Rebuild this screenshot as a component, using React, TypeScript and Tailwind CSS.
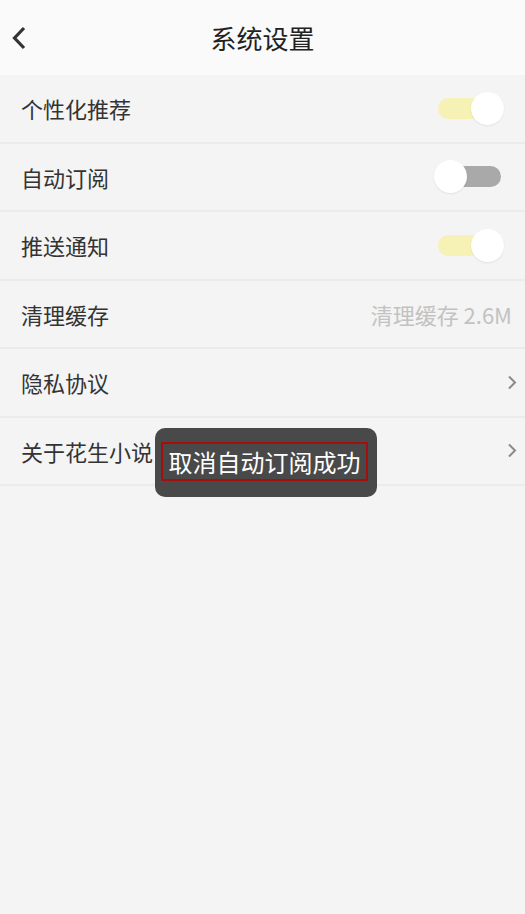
import React from "react";

type Row = {
  label: string;
  kind: "toggle" | "value" | "link";
  on?: boolean;
  value?: string;
};

const rows: Row[] = [
  { label: "个性化推荐", kind: "toggle", on: true },
  { label: "自动订阅", kind: "toggle", on: false },
  { label: "推送通知", kind: "toggle", on: true },
  { label: "清理缓存", kind: "value", value: "清理缓存 2.6M" },
  { label: "隐私协议", kind: "link" },
  { label: "关于花生小说", kind: "link" }
];

function Toggle({ on }: { on: boolean }) {
  return (
    <div className="relative mr-[14px] h-[33px] w-[70px]">
      <div
        className={
          "absolute left-[4px] top-[6px] h-[21px] w-[63px] rounded-full " +
          (on ? "bg-[#f6f1b4]" : "bg-[#a9a9a9]")
        }
      />
      <div
        className={
          "absolute top-0 h-[33px] w-[33px] rounded-full bg-white shadow-[0_1px_2px_rgba(0,0,0,0.08)] " +
          (on ? "right-0" : "left-0")
        }
      />
    </div>
  );
}

function Chevron() {
  return (
    <svg width="11" height="15" viewBox="0 0 11 15" fill="none">
      <path d="M2 1.5 L8 7.5 L2 13.5" stroke="#8a8a8a" strokeWidth="2" />
    </svg>
  );
}

export default function App() {
  return (
    <div
      className="relative min-h-[914px] w-full bg-[#f4f4f4] text-[#333]"
      style={{ fontFamily: '"Noto Sans CJK SC", "Noto Sans", sans-serif' }}
    >
      <header className="relative flex h-[75px] items-center justify-center bg-[#fafafa]">
        <svg
          className="absolute left-[11px] top-[26px]"
          width="16"
          height="24"
          viewBox="0 0 16 24"
          fill="none"
        >
          <path d="M13 2 L3.5 12 L13 22" stroke="#333" strokeWidth="3.2" />
        </svg>
        <h1 className="text-[26px] font-normal leading-none text-[#222]">系统设置</h1>
      </header>

      <div>
        {rows.map((r) => (
          <div
            key={r.label}
            className="flex h-[68.5px] items-center justify-between border-b-2 border-[#ebebeb] pl-[21px] pr-[7px]"
          >
            <span className="text-[22px] leading-none">{r.label}</span>
            {r.kind === "toggle" && <Toggle on={!!r.on} />}
            {r.kind === "value" && (
              <span className="pr-[6px] text-[22px] leading-none text-[#c2c2c2]">{r.value}</span>
            )}
            {r.kind === "link" && <Chevron />}
          </div>
        ))}
      </div>

      <div className="absolute left-[155px] top-[428px] flex h-[69px] w-[222px] items-start rounded-[10px] bg-[#494949] pl-[6px] pt-[14px]">
        <div className="flex h-[39px] w-[207px] items-center justify-center border-2 border-[#a30f0f]">
          <span className="text-[24px] leading-none text-white">取消自动订阅成功</span>
        </div>
      </div>
    </div>
  );
}
